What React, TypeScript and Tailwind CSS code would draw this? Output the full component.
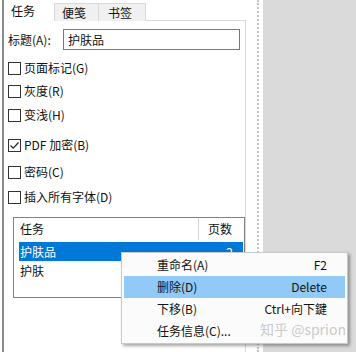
import React from 'react'

const FONT = '"Microsoft YaHei", "Noto Sans CJK SC", "Noto Sans", sans-serif'

function Check({ label, checked, className }: { label: string; checked?: boolean; className?: string }) {
  return (
    <div className={`flex items-center h-[16px] ${className ?? ''}`}>
      <div className="w-[13px] h-[13px] border border-[#333] bg-white flex items-center justify-center shrink-0">
        {checked && (
          <svg width="11" height="11" viewBox="0 0 11 11">
            <path d="M1.5 5.5 L4.2 8.2 L9.5 2.5" fill="none" stroke="#222" strokeWidth="1.2" />
          </svg>
        )}
      </div>
      <span className="ml-[3px] text-[12px] leading-none text-[#111]">{label}</span>
    </div>
  )
}

const menuItems = [
  { label: '重命名(A)', key: 'F2' },
  { label: '删除(D)', key: 'Delete', active: true },
  { label: '下移(B)', key: 'Ctrl+向下鍵' },
  { label: '任务信息(C)...', key: '' },
]

export default function App() {
  return (
    <div className="relative w-[356px] h-[352px] bg-white flex overflow-hidden" style={{ fontFamily: FONT }}>
      {/* left frame line */}
      <div className="w-[2px] shrink-0" />
      <div className="w-[2px] bg-[#8a8a8a] shrink-0" />

      {/* tab control */}
      <div className="w-[242px] shrink-0 flex flex-col">
        <div className="flex h-[21px] items-end">
          <div className="w-[50px] h-[21px] bg-white flex items-center pl-[7px] text-[12px] text-[#111]">任务</div>
          <div className="w-[45px] h-[18px] bg-[#f0f0f0] border border-b-0 border-[#d9d9d9] flex items-center pl-[7px] text-[12px] text-[#111]">便笺</div>
          <div className="w-[47px] h-[18px] bg-[#f0f0f0] border border-l-0 border-b-0 border-[#d9d9d9] flex items-center pl-[9px] text-[12px] text-[#111]">书签</div>
          <div className="flex-1 h-full border-b border-[#d9d9d9]" />
        </div>

        <div className="flex-1 flex flex-col border-r border-[#d9d9d9] pl-[4px]">
          {/* title row */}
          <div className="flex items-center mt-[8px] h-[21px]">
            <span className="text-[12px] text-[#111] w-[55px]">标题(A):</span>
            <div className="w-[177px] h-[21px] border border-[#7a7a7a] flex items-center pl-[4px] text-[12px] text-[#111]">护肤品</div>
          </div>

          <Check label="页面标记(G)" className="mt-[10px]" />
          <Check label="灰度(R)" className="mt-[7px]" />
          <Check label="变浅(H)" className="mt-[8px]" />
          <Check label="PDF 加密(B)" checked className="mt-[14px]" />
          <Check label="密码(C)" className="mt-[11px]" />
          <Check label="插入所有字体(D)" className="mt-[9px]" />

          {/* list */}
          <div className="ml-[5px] mt-[12px] w-[232px] h-[81px] border border-[#828282] flex flex-col">
            <div className="flex h-[22px] text-[12px] text-[#111]">
              <div className="w-[185px] border-r border-[#d5d5d5] flex items-center pl-[6px]">任务</div>
              <div className="flex-1 flex items-center pl-[9px]">页数</div>
            </div>
            <div className="mt-[2px] ml-[5px] mr-[1px] h-[19px] bg-[#0078d7] text-white text-[12px] flex items-center justify-between pr-[10px]">
              <span className="pl-[1px]">护肤品</span>
              <span>2</span>
            </div>
            <div className="ml-[5px] h-[19px] text-[12px] text-[#111] flex items-center pl-[1px]">护肤</div>
          </div>
        </div>
      </div>

      {/* splitter */}
      <div className="w-[11px] shrink-0" />
      <div className="w-[2px] shrink-0 border-l-2 border-dotted border-[#c4c4c4]" />
      <div className="w-[4px] shrink-0" />
      <div className="flex-1 bg-[#dadada]" />

      {/* context menu */}
      <div className="absolute left-[121px] top-[252px] w-[227px] bg-[#fbfbfb] border border-[#c8c8c8] py-[1px] px-[2px] shadow-[2px_2px_3px_rgba(0,0,0,0.35)]">
        {menuItems.map((m) => (
          <div
            key={m.label}
            className={`h-[22px] flex items-center justify-between pl-[33px] pr-[18px] text-[12px] text-[#111] ${m.active ? 'bg-[#91c9f7]' : ''}`}
          >
            <span>{m.label}</span>
            <span>{m.key}</span>
          </div>
        ))}
      </div>

      {/* watermark */}
      <div className="absolute left-[260px] top-[322px] text-[14px] text-[#c4c4c4]/90 leading-none whitespace-nowrap">
        知乎 @sprion
      </div>
    </div>
  )
}
